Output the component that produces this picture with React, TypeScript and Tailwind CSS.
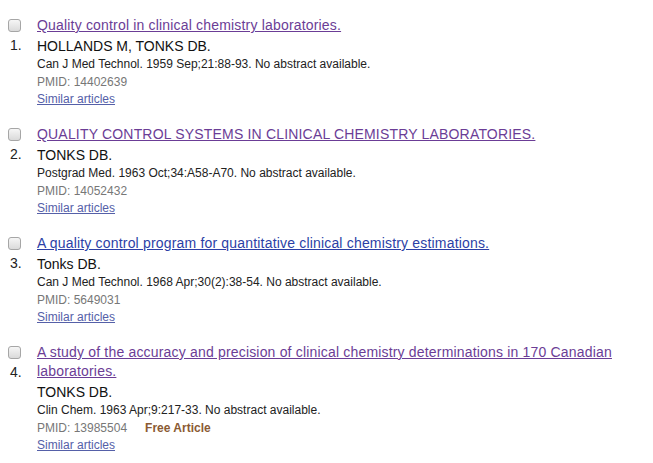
const items = [
  {
    n: 1,
    title: "Quality control in clinical chemistry laboratories.",
    visited: true,
    authors: "HOLLANDS M, TONKS DB.",
    meta: "Can J Med Technol. 1959 Sep;21:88-93. No abstract available.",
    pmid: "14402639",
    free: false,
  },
  {
    n: 2,
    title: "QUALITY CONTROL SYSTEMS IN CLINICAL CHEMISTRY LABORATORIES.",
    visited: true,
    authors: "TONKS DB.",
    meta: "Postgrad Med. 1963 Oct;34:A58-A70. No abstract available.",
    pmid: "14052432",
    free: false,
  },
  {
    n: 3,
    title: "A quality control program for quantitative clinical chemistry estimations.",
    visited: false,
    authors: "Tonks DB.",
    meta: "Can J Med Technol. 1968 Apr;30(2):38-54. No abstract available.",
    pmid: "5649031",
    free: false,
  },
  {
    n: 4,
    title:
      "A study of the accuracy and precision of clinical chemistry determinations in 170 Canadian laboratories.",
    visited: true,
    authors: "TONKS DB.",
    meta: "Clin Chem. 1963 Apr;9:217-33. No abstract available.",
    pmid: "13985504",
    free: true,
  },
];

function Checkbox() {
  return (
    <div className="h-[13px] w-[13px] rounded-[3px] border border-[#a6a6a6] bg-gradient-to-b from-[#f6f6f6] to-[#dadada]" />
  );
}

export default function App() {
  return (
    <div className="min-h-[463px] w-[653px] bg-white pt-4 font-['Liberation_Sans',Arial,sans-serif]">
      <div className="flex flex-col gap-[17px]">
        {items.map((it) => (
          <div key={it.n} className="flex">
            <div className="flex w-[37px] shrink-0 flex-col pl-2 pt-[3px]">
              <Checkbox />
              <span className="mt-[4px] pl-[2px] text-[14px] leading-[18px] text-[#222]">
                {it.n}.
              </span>
            </div>
            <div className="flex w-[600px] flex-col">
              <a
                href="#"
                className={`text-[14px] leading-[19px] tracking-[0.18px] underline ${
                  it.visited ? "text-[#6b3d96]" : "text-[#2c3fa6]"
                }`}
              >
                {it.title}
              </a>
              <p className="mt-[2px] text-[14px] leading-[18px] text-[#111]">{it.authors}</p>
              <p className="text-[12px] leading-[18px] text-[#222]">{it.meta}</p>
              <p className="text-[12px] leading-[18px] text-[#777]">
                PMID: {it.pmid}
                {it.free && (
                  <span className="ml-[18px] font-bold text-[#8b5a33]">Free Article</span>
                )}
              </p>
              <a href="#" className="w-fit text-[12px] leading-[17px] text-[#5560a8] underline">
                Similar articles
              </a>
            </div>
          </div>
        ))}
      </div>
    </div>
  );
}
